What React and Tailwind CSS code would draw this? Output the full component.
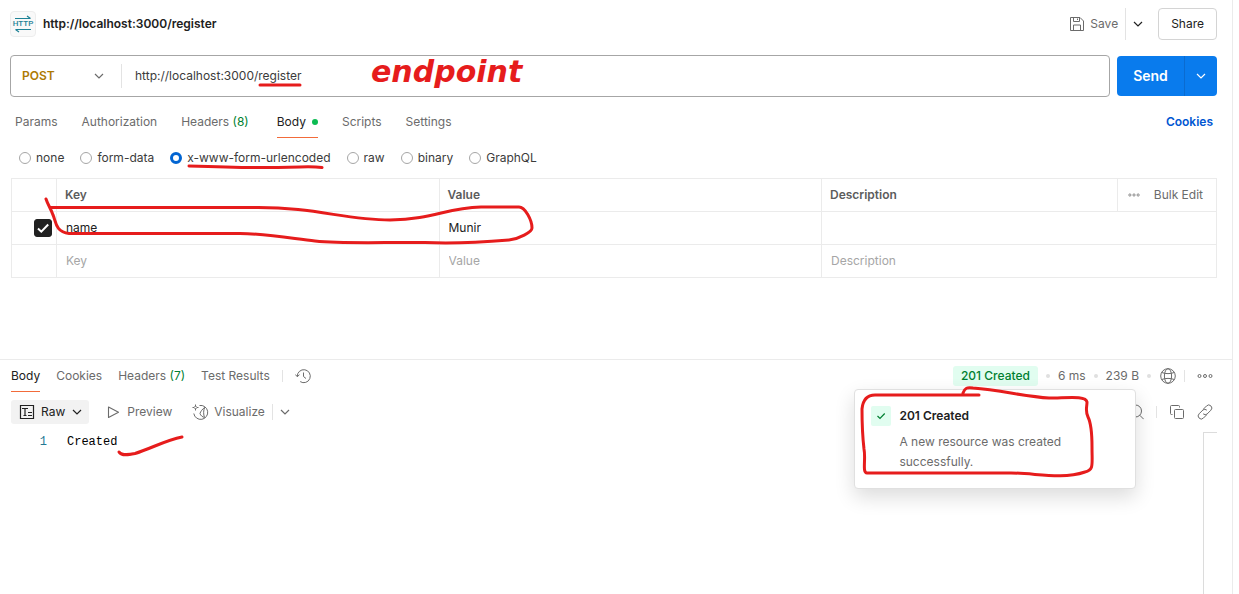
import { useState } from "react";

const RED = "#e61c1c";

function Chevron({ className = "" }) {
  return (
    <svg className={"h-3 w-3 shrink-0 " + className} viewBox="0 0 12 12" fill="none" stroke="currentColor" strokeWidth="1.2" aria-hidden="true">
      <path d="M2 4l4 4 4-4" />
    </svg>
  );
}

function HttpBadge() {
  return (
    <span className="relative flex h-[26px] w-[26px] shrink-0 items-center justify-center rounded border border-[#ededed] bg-[#f9f9f9] text-[#1d8296]">
      <svg className="absolute inset-0 h-6 w-6" viewBox="0 0 24 24" fill="none" stroke="currentColor" strokeWidth="1.2" aria-hidden="true">
        <path d="M4 6.500h15.500M16 4l3.500 2.500M20 17.500H4.500M8 20l-3.500-2.500" />
      </svg>
      <span className="font-[Roboto,sans-serif] text-[8px] leading-none font-medium">HTTP</span>
    </span>
  );
}

function SaveIcon() {
  return (
    <svg className="h-4 w-4" viewBox="0 0 16 16" fill="none" stroke="currentColor" aria-hidden="true">
      <path d="M1.500 1.500h9.500l3.500 3.500v9.500h-13zM4.500 1.500v4h6v-4M4.500 14.500v-5.500h7v5.500M8.500 2.500v1.500" />
    </svg>
  );
}

function DotsIcon({ className }) {
  return (
    <svg className={className} viewBox="0 0 16 16" fill="none" stroke="currentColor" aria-hidden="true">
      <circle cx="2.500" cy="8" r="1.500" />
      <circle cx="8" cy="8" r="1.500" />
      <circle cx="13.500" cy="8" r="1.500" />
    </svg>
  );
}

function HistoryIcon() {
  return (
    <svg className="h-4 w-4" viewBox="0 0 16 16" fill="none" stroke="currentColor" aria-hidden="true">
      <path d="M2.300 8.500A6.500 6.500 0 1 1 5.200 13.600M0.300 6.500l2 2.200 2.200-2M8.500 4.500v4l2.500 2" />
    </svg>
  );
}

function RawIcon() {
  return (
    <svg className="h-4 w-4" viewBox="0 0 16 16" fill="none" stroke="currentColor" aria-hidden="true">
      <path d="M1.500 1.500h13v13h-13zM3 4.500h6M6 4.500v7M4.500 11.500h3M9 8.500h4M9 11.500h4" strokeWidth="1.200" />
    </svg>
  );
}

function PlayIcon() {
  return (
    <svg className="h-4 w-4" viewBox="0 0 16 16" fill="none" stroke="currentColor" strokeWidth="1.100" strokeLinejoin="round" aria-hidden="true">
      <path d="M3.500 3v10.500l10-5.200z" />
    </svg>
  );
}

function VisualizeIcon() {
  return (
    <svg className="h-4 w-4 overflow-visible" viewBox="0 0 16 16" fill="none" stroke="currentColor" aria-hidden="true">
      <path d="M7.500 1.500A7 7 0 1 1 1.800 9.500" />
      <path d="M12.800 3.300C10.500 5 8.500 7.500 8 9.500c.5 2 2.500 3.500 4.500 4M12.800 3.300c-1.500 3-1.500 7-.3 10.200" />
      <path d="M3.500 2L5 3.500 3.500 5 2 3.500zM3.500 .5V2M3.500 5v1.500M.5 3.500H2M5 3.500h1.500" />
    </svg>
  );
}

function GlobeIcon() {
  return (
    <svg className="h-4 w-4" viewBox="0 0 16 16" fill="none" stroke="currentColor" aria-hidden="true">
      <circle cx="8" cy="8" r="7.300" />
      <ellipse cx="8" cy="8" rx="3.600" ry="7.300" />
      <path d="M1.700 4.500c4 1.500 8.600 1.500 12.600 0M1.700 11.500c4-1.500 8.600-1.500 12.600 0" />
    </svg>
  );
}

function SearchIcon() {
  return (
    <svg className="h-4 w-4" viewBox="0 0 16 16" fill="none" stroke="currentColor" aria-hidden="true">
      <circle cx="7.500" cy="7" r="6" />
      <path d="M11.700 11.200l4 4" />
    </svg>
  );
}

function CopyIcon() {
  return (
    <svg className="h-4 w-4" viewBox="0 0 16 16" fill="none" stroke="currentColor" aria-hidden="true">
      <rect x="5.500" y="5.500" width="9" height="9" rx="1" />
      <path d="M3.500 10.500h-1a1 1 0 0 1-1-1v-7a1 1 0 0 1 1-1h7a1 1 0 0 1 1 1v1" />
    </svg>
  );
}

function LinkIcon() {
  return (
    <svg className="h-4 w-4" viewBox="0 0 16 16" fill="none" stroke="currentColor" strokeLinecap="round" aria-hidden="true">
      <path d="M6.500 5l3.100-3.100a2.900 2.900 0 0 1 4.300 4.300L10 10.100a2.900 2.900 0 0 1-3.500 0M9.500 11l-3.100 3.100a2.900 2.900 0 0 1-4.300-4.300L6 5.900a2.900 2.900 0 0 1 3.500 0" />
    </svg>
  );
}

function Ink({ className, width, height, d }) {
  return (
    <svg
      className={"pointer-events-none absolute z-20 overflow-visible " + className}
      width={width}
      height={height}
      viewBox={`0 0 ${width} ${height}`}
      fill="none"
      stroke={RED}
      strokeWidth="3"
      strokeLinecap="round"
      strokeLinejoin="round"
      aria-hidden="true"
    >
      <path d={d} />
    </svg>
  );
}

function Divider({ className = "h-3" }) {
  return <span className={"w-px shrink-0 bg-[#e3e3e3] " + className} />;
}

function Dot() {
  return <span className="h-1 w-1 shrink-0 rounded-full bg-[#e0e0e0]" />;
}

const bodyTypes = ["none", "form-data", "x-www-form-urlencoded", "raw", "binary", "GraphQL"];

function TitleBar() {
  return (
    <header className="flex h-8 items-center">
      <HttpBadge />
      <h1 className="ml-[7px] font-semibold text-[#212121]">http://localhost:3000/register</h1>
      <div className="ml-auto flex h-full items-center">
        <button className="flex items-center gap-[5px] pr-[7px] text-[#6b6b6b]">
          <SaveIcon />
          Save
        </button>
        <Divider className="h-full" />
        <button aria-label="Save options" className="flex h-full w-6 items-center justify-center text-[#212121]">
          <Chevron />
        </button>
        <button className="ml-2 h-full rounded border border-[#d4d4d4] px-3 text-[#212121]">Share</button>
      </div>
    </header>
  );
}

function UrlBar() {
  return (
    <div className="mt-[15px] flex items-center gap-[7px]">
      <div className="flex h-[42px] flex-1 items-center rounded border border-[#a6a6a6]">
        <div className="relative flex w-[110px] items-center">
          <select aria-label="Method" className="w-full appearance-none bg-transparent pl-[11px] font-semibold text-[#ad7a03] outline-none">
            <option>POST</option>
          </select>
          <Chevron className="pointer-events-none absolute right-4 text-[#6b6b6b]" />
        </div>
        <Divider className="h-6" />
        <div className="relative flex-1">
          <input
            aria-label="Request URL"
            defaultValue="http://localhost:3000/register"
            className="w-full bg-transparent pl-[13px] text-[#3b3b3b] outline-none"
          />
          <Ink className="top-[16px] left-[137px]" width={42} height={3} d="M1 1H41" />
          <span className="pointer-events-none absolute top-1/2 left-[249px] -translate-y-1/2 pb-2 font-['DejaVu_Sans',sans-serif] text-[30px] leading-none font-bold text-[#e61c1c] italic">
            endpoint
          </span>
        </div>
      </div>
      <div className="flex h-10 rounded bg-[#097bed] text-white">
        <button className="w-[67px] text-[14px] font-semibold">Send</button>
        <button aria-label="Send options" className="flex w-[33px] items-center justify-center border-l border-[#0a6bd0]">
          <Chevron />
        </button>
      </div>
    </div>
  );
}

function RequestTabs() {
  const tab = "flex h-full items-center border-b border-transparent text-[#6b6b6b]";
  return (
    <nav className="mt-[10px] flex h-[31px] items-center gap-6 pr-1 pl-[5px]">
      <button className={tab}>Params</button>
      <button className={tab}>Authorization</button>
      <button className={tab + " mr-1"}>
        Headers&nbsp;<span className="text-[#007f31]">(8)</span>
      </button>
      <button className="flex h-full items-center gap-[6px] border-b border-[#f26b3a] text-[#212121]">
        Body
        <span className="h-[6px] w-[6px] rounded-full bg-[#0cbb52]" />
      </button>
      <button className={tab}>Scripts</button>
      <button className={tab}>Settings</button>
      <a href="#cookies" className="ml-auto flex h-full items-center border-b border-transparent font-semibold text-[#0056d2]">Cookies</a>
    </nav>
  );
}

function BodyTypes() {
  const [type, setType] = useState("x-www-form-urlencoded");
  return (
    <fieldset className="flex h-10 items-center gap-4 pl-[9px] text-[#3b3b3b]">
      {bodyTypes.map((t) => (
        <label key={t} className="relative flex items-center gap-[5px] whitespace-nowrap">
          <input
            type="radio"
            name="body-type"
            checked={type === t}
            onChange={() => setType(t)}
            className="h-3 w-3 appearance-none rounded-full border border-[#a6a6a6] bg-white checked:border-[3px] checked:border-[#0265d2]"
          />
          {t}
          {t === "x-www-form-urlencoded" && (
            <Ink className="top-[15px] left-[18px]" width={136} height={4} d="M1 1C30 2 60 3 90 2.500S122 1 134 2.500" />
          )}
        </label>
      ))}
    </fieldset>
  );
}

function ParamsTable() {
  const cell = "border border-[#ebebeb] px-2 text-left font-normal";
  const field = "block w-full bg-transparent pl-px text-[#212121] outline-none placeholder:text-[#a6a6a6]";
  return (
    <div className="relative ml-px">
      <table className="w-full table-fixed border-collapse">
        <colgroup>
          <col className="w-[45px]" />
          <col />
          <col />
          <col className="w-[296px]" />
          <col className="w-[99px]" />
        </colgroup>
        <thead>
          <tr className="h-[33px] text-[#5c5c5c]">
            <th className={cell} />
            <th className={cell}><span className="font-semibold">Key</span></th>
            <th className={cell}><span className="font-semibold">Value</span></th>
            <th className={cell}><span className="font-semibold">Description</span></th>
            <th className={cell}>
              <div className="flex items-center justify-between pr-[5px] pl-[2px] text-[#6b6b6b]">
                <button aria-label="More columns"><DotsIcon className="h-3 w-3" /></button>
                <button>Bulk Edit</button>
              </div>
            </th>
          </tr>
        </thead>
        <tbody>
          <tr className="h-[33px]">
            <td className="border border-[#ebebeb]">
              <label className="relative ml-[22px] flex h-[18px] w-[18px]">
                <input type="checkbox" defaultChecked aria-label="Include name" className="peer h-full w-full appearance-none rounded-[3px] border border-[#212121] checked:bg-[#212121]" />
                <svg className="pointer-events-none absolute inset-0 hidden h-[18px] w-[18px] peer-checked:block" viewBox="0 0 18 18" fill="none" stroke="white" strokeWidth="2" aria-hidden="true">
                  <path d="M4 9.500l3.300 3.200L14.200 5.500" />
                </svg>
              </label>
            </td>
            <td className={cell}><input aria-label="Key" defaultValue="name" className={field} /></td>
            <td className={cell}><input aria-label="Value" defaultValue="Munir" className={field} /></td>
            <td className={cell} colSpan={2}><input aria-label="Description" className={field} /></td>
          </tr>
          <tr className="h-[33px]">
            <td className={cell} />
            <td className={cell}><input aria-label="New key" placeholder="Key" className={field} /></td>
            <td className={cell}><input aria-label="New value" placeholder="Value" className={field} /></td>
            <td className={cell} colSpan={2}><input aria-label="New description" placeholder="Description" className={field} /></td>
          </tr>
        </tbody>
      </table>
      <Ink
        className="top-[20px] left-[34px]"
        width={490}
        height={46}
        d="M1 1C3 7 6 11 8 17C11 23 10 34 24 35.500L195 35.500C225 36 250 41 270 43C300 46 340 44 380 44.500C410 46 440 44 464 42C474 41 487 34 487 30C487 22 480 9 474 9L436 9C400 10 390 21 345 22C300 22 270 9 210 9.500L5 9.500"
      />
    </div>
  );
}

function StatusPopover() {
  return (
    <div role="tooltip" className="absolute top-[23px] left-1/2 z-10 flex w-[282px] -translate-x-1/2 gap-2 rounded border border-[#e0e0e0] bg-white px-4 pt-4 pb-4 shadow-[0_8px_20px_rgba(0,0,0,0.14)]">
      <span className="flex h-5 w-5 shrink-0 items-center justify-center rounded-[2px] bg-[#e1fdf0] text-[#007f31]">
        <svg className="h-3 w-3" viewBox="0 0 12 12" fill="none" stroke="currentColor" strokeWidth="1.200" aria-hidden="true">
          <path d="M2.500 6l2.500 2.500 4.700-5" />
        </svg>
      </span>
      <div className="leading-5">
        <p className="font-semibold text-[#212121]">201 Created</p>
        <p className="mt-[6px] text-[#6b6b6b]">A new resource was created successfully.</p>
      </div>
      <Ink
        className="-top-[3px] left-[6px]"
        width={234}
        height={90}
        d="M102 6C104 1 106 0 112 1C140 3 165 10 188 11C205 11 225 8 226 15C226 20 224 24 227 30C230 36 231 48 231 60C231 78 233 83 224 85C200 93 175 86 150 86L6 86C1 86 5 72 3 62C1 45 1 35 1 22C2 12 7 8 14 8L118 8"
      />
    </div>
  );
}

function ResponseTabs() {
  const tab = "flex h-full items-center border-b border-transparent";
  return (
    <div className="flex h-8 items-center pr-[19px] pl-[11px] text-[#6b6b6b]">
      <nav className="flex h-full items-center gap-4">
        <button className="flex h-full items-center border-b border-[#f26b3a] text-[#212121]">Body</button>
        <button className={tab}>Cookies</button>
        <button className={tab}>
          Headers&nbsp;<span className="text-[#007f31]">(7)</span>
        </button>
        <button className={tab}>Test Results</button>
      </nav>
      <Divider className="ml-3 h-3" />
      <button aria-label="History" className="ml-3"><HistoryIcon /></button>
      <div className="ml-auto flex items-center gap-2">
        <div className="relative">
          <button className="block h-5 rounded-[3px] bg-[#e1fdf0] px-2 font-medium text-[#007f31]">201 Created</button>
          <StatusPopover />
        </div>
        <Dot />
        <span>6 ms</span>
        <Dot />
        <span>239 B</span>
        <Dot />
        <button aria-label="Network" className="ml-px"><GlobeIcon /></button>
        <Divider />
        <button aria-label="More response actions" className="ml-1"><DotsIcon className="h-4 w-4" /></button>
      </div>
    </div>
  );
}

function ResponseToolbar() {
  return (
    <div className="mt-2 flex h-6 items-center pr-[19px] pl-[11px] text-[#6b6b6b]">
      <button className="flex h-full items-center gap-[6px] rounded-[3px] bg-[#f2f2f2] px-[6px] pl-2 text-[#212121]">
        <RawIcon />
        Raw
        <Chevron />
      </button>
      <button className="ml-4 flex items-center gap-[6px]">
        <PlayIcon />
        Preview
      </button>
      <button className="ml-5 flex items-center gap-[6px]">
        <VisualizeIcon />
        Visualize
      </button>
      <Divider className="ml-[7px] h-4" />
      <button aria-label="Visualize options" className="ml-[6px]"><Chevron /></button>
      <div className="ml-auto flex items-center gap-3">
        <button aria-label="Search"><SearchIcon /></button>
        <Divider />
        <button aria-label="Copy"><CopyIcon /></button>
        <button aria-label="Copy link"><LinkIcon /></button>
      </div>
    </div>
  );
}

export default function App() {
  return (
    <div className="flex min-h-screen bg-white pr-[6px] font-[Inter,sans-serif] text-[12px] leading-4">
      <main className="flex flex-1 flex-col border-r border-[#ebebeb]">
        <section className="border-b border-[#ebebeb] pt-2 pr-[15px] pb-[81px] pl-[10px]">
          <TitleBar />
          <UrlBar />
          <RequestTabs />
          <BodyTypes />
          <ParamsTable />
        </section>
        <section className="flex flex-1 flex-col">
          <ResponseTabs />
          <ResponseToolbar />
          <div className="mt-2 flex flex-1 pr-[15px] font-['Liberation_Mono',monospace]">
            <div className="flex flex-1 leading-5">
              <span className="w-[47px] text-right text-[#237893]">1</span>
              <code className="relative ml-5 self-start font-['Liberation_Mono',monospace] text-black">
                Created
                <Ink className="top-[4px] left-[51px]" width={65} height={20} d="M1 16C4 20 10 19 17 17.500C32 13 48 4 64 1" />
              </code>
            </div>
            <div className="w-[14px] border-t border-l border-[#dcdcdc]" />
          </div>
        </section>
      </main>
    </div>
  );
}
